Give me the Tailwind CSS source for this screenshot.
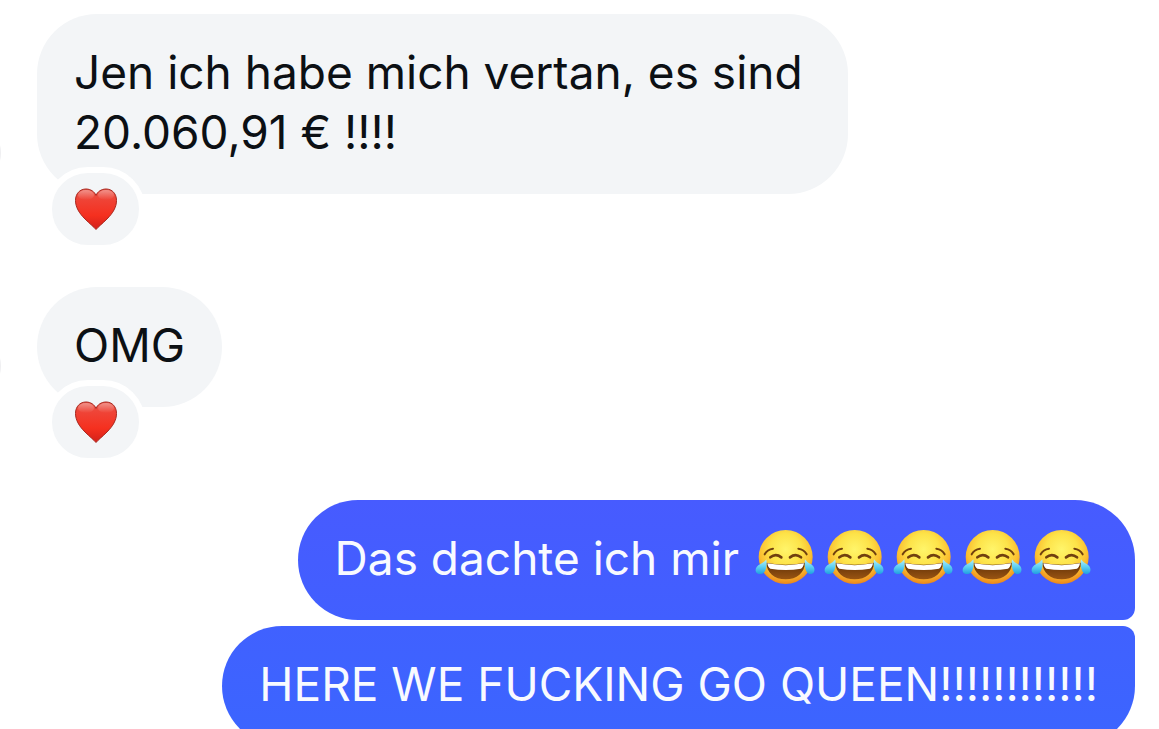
<!DOCTYPE html>
<html lang="de">

<head>
  <meta charset="UTF-8" />
  <meta name="viewport" content="width=device-width, initial-scale=1.0" />
  <title>Chat</title>
  <script src="https://cdn.jsdelivr.net/npm/@tailwindcss/browser@4"></script>
</head>

<body class="bg-white min-h-screen overflow-hidden font-[Inter,sans-serif] text-[46px] leading-[60px] text-[#0c1014]">

  <!-- Emoji symbols -->
  <svg class="absolute size-0" aria-hidden="true">
    <defs>
      <radialGradient id="face" cx="0.5" cy="0.36" r="0.64">
        <stop offset="0" stop-color="#fff56a" />
        <stop offset="0.45" stop-color="#fde349" />
        <stop offset="0.75" stop-color="#fbbf30" />
        <stop offset="1" stop-color="#ec861c" />
      </radialGradient>
      <linearGradient id="mouth" x1="0" y1="0" x2="0" y2="1">
        <stop offset="0" stop-color="#5f2f08" />
        <stop offset="1" stop-color="#9a5512" />
      </linearGradient>
      <linearGradient id="tear" x1="0" y1="0" x2="0" y2="1">
        <stop offset="0" stop-color="#b5effb" />
        <stop offset="0.5" stop-color="#5fd0f3" />
        <stop offset="1" stop-color="#1f9fe0" />
      </linearGradient>
      <linearGradient id="heart-fill" x1="0" y1="0" x2="0" y2="1">
        <stop offset="0" stop-color="#e9574b" />
        <stop offset="0.25" stop-color="#ef4437" />
        <stop offset="0.65" stop-color="#f5301f" />
        <stop offset="1" stop-color="#d3201a" />
      </linearGradient>
      <linearGradient id="heart-shine" x1="0" y1="0" x2="0" y2="1">
        <stop offset="0" stop-color="#fff" stop-opacity="0.35" />
        <stop offset="1" stop-color="#fff" stop-opacity="0" />
      </linearGradient>
    </defs>
    <symbol id="joy" viewBox="0 7 180 180">
      <circle cx="92" cy="94" r="81" fill="url(#face)" />
      <g fill="none" stroke="#70400f" stroke-width="6" stroke-linecap="round">
        <path d="M29 86Q37 71 54 69" />
        <path d="M155 86Q147 71 130 69" />
        <path d="M46 95Q62 82 79 95" stroke-width="8" />
        <path d="M105 95Q122 82 138 95" stroke-width="8" />
      </g>
      <path d="M34 111Q92 123 150 111C149 140 126 161 92 161S35 140 34 111Z" fill="url(#mouth)" />
      <path d="M37 113Q92 124 147 113C146 121 143 126 138 129Q92 137 46 129C41 126 38 121 37 113Z" fill="#fff" />
      <path d="M34 101C36 113 35 128 29 138C23 147 8 148 3 139C-1 129 6 121 15 116C23 112 29 108 34 101Z" fill="url(#tear)" />
      <path d="M150 101C148 113 149 128 155 138C161 147 171 148 177 139C181 129 176 121 168 116C161 112 155 108 150 101Z" fill="url(#tear)" />
    </symbol>
    <symbol id="heart" viewBox="0 0 42 42">
      <path d="M21 41.5C19 39 15 36 10 31C4 25 .5 19 .5 12.500C.5 5.500 5 1 11 1C15.500 1 19.500 3.500 21 7.500C22.500 3.500 26.500 1 31 1C37 1 41.500 5.500 41.500 12.500C41.500 19 38 25 32 31C27 36 23 39 21 41.500Z"
        fill="url(#heart-fill)" stroke="#a8281f" stroke-width="1" />
      <ellipse cx="11" cy="7" rx="8" ry="5" fill="url(#heart-shine)" />
      <ellipse cx="31" cy="7" rx="8" ry="5" fill="url(#heart-shine)" />
    </symbol>
  </svg>

  <main class="flex flex-col pt-[14px] pl-[37px] pr-6">

    <!-- Received messages -->
    <div class="relative self-start max-w-[70vw] mb-[93px] px-[37px] pt-7 pb-8 rounded-[60px] bg-[#f3f5f7]">
      <!-- Avatar, mostly off the left edge -->
      <span class="absolute -left-[100px] bottom-[9px] size-16 rounded-full bg-[#efeff1]"></span>
      <p>Jen ich habe mich vertan, es sind 20.060,91 € !!!!</p>
      <div
        class="absolute -bottom-[57px] left-[9px] flex items-center justify-center w-[99px] h-[84px] rounded-[42px] border-6 border-white bg-[#f3f5f7]">
        <svg class="size-[42px]" role="img" aria-label="Herz"><use href="#heart" /></svg>
      </div>
    </div>

    <div class="relative self-start max-w-[70vw] mb-[93px] px-[37px] pt-7 pb-8 rounded-[60px] bg-[#f3f5f7]">
      <span class="absolute -left-[100px] bottom-[9px] size-16 rounded-full bg-[#efeff1]"></span>
      <p>OMG</p>
      <div
        class="absolute -bottom-[57px] left-[9px] flex items-center justify-center w-[99px] h-[84px] rounded-[42px] border-6 border-white bg-[#f3f5f7]">
        <svg class="size-[42px]" role="img" aria-label="Herz"><use href="#heart" /></svg>
      </div>
    </div>

    <!-- Sent messages -->
    <div class="flex flex-col items-end gap-[6px] text-[#f8faff]">
      <div
        class="flex items-center gap-4 pl-[37px] pr-11 pt-7 pb-8 rounded-[60px] rounded-br-xl bg-linear-to-b from-[#475bff] to-[#415fff]">
        <p>Das dachte ich mir</p>
        <div class="flex gap-[9px]">
          <svg class="size-[60px]" role="img" aria-label="Lachen"><use href="#joy" /></svg>
          <svg class="size-[60px]" role="img" aria-label="Lachen"><use href="#joy" /></svg>
          <svg class="size-[60px]" role="img" aria-label="Lachen"><use href="#joy" /></svg>
          <svg class="size-[60px]" role="img" aria-label="Lachen"><use href="#joy" /></svg>
          <svg class="size-[60px]" role="img" aria-label="Lachen"><use href="#joy" /></svg>
        </div>
      </div>
      <div
        class="px-[37px] pt-7 pb-8 rounded-[60px] rounded-tr-xl bg-linear-to-b from-[#4061ff] to-[#3b65ff]">
        <p>HERE WE FUCKING GO QUEEN!!!!!!!!!!!!</p>
      </div>
    </div>

  </main>

</body>

</html>
